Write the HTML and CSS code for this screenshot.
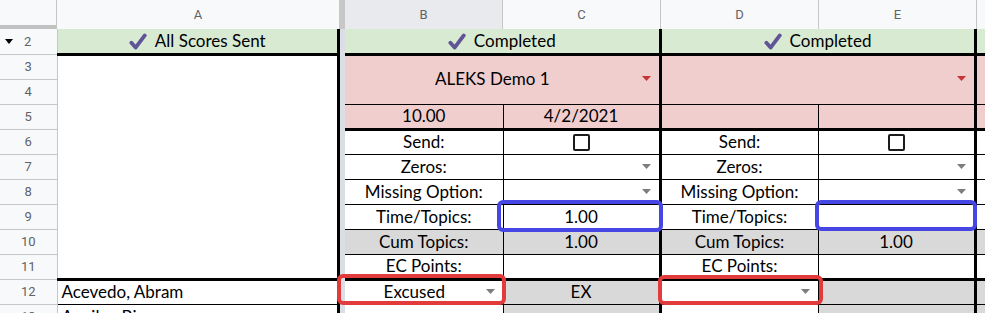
FILE: index.html
```html
<!DOCTYPE html>
<html lang="en">

<head>
  <meta charset="UTF-8">
  <meta name="viewport" content="width=device-width, initial-scale=1.0">
  <title>Scores Sheet</title>
  <link rel="stylesheet" href="styles.css">
</head>

<body>
  <div class="sheet">

    <!-- column letters -->
    <div class="col-heads">
      <div class="corner"></div>
      <div class="col-head head-a">A</div>
      <div class="freeze-bar"></div>
      <div class="col-head head-b selected">B</div>
      <div class="col-head head-c">C</div>
      <div class="col-head head-d">D</div>
      <div class="col-head head-e">E</div>
      <div class="col-head head-f"></div>
    </div>

    <div class="panes">
      <!-- frozen part: row numbers + column A -->
      <table class="pane pane-frozen">
        <colgroup>
          <col class="col-rh">
          <col class="col-a">
        </colgroup>
        <tr class="row-title">
          <th class="rh rh-fold"><svg class="fold" viewBox="0 0 8 5"><path d="M0 0h8L4 5z" /></svg>2</th>
          <td class="title">
            <svg class="tick" viewBox="0 0 18 17"><path d="M2.4 9.8L6.6 14.6L15.8 2.4" /></svg>All Scores Sent
          </td>
        </tr>
        <tr>
          <th class="rh">3</th>
          <td class="blank" rowspan="9"></td>
        </tr>
        <tr><th class="rh">4</th></tr>
        <tr><th class="rh">5</th></tr>
        <tr><th class="rh">6</th></tr>
        <tr><th class="rh">7</th></tr>
        <tr><th class="rh">8</th></tr>
        <tr><th class="rh">9</th></tr>
        <tr><th class="rh">10</th></tr>
        <tr><th class="rh">11</th></tr>
        <tr class="row-student">
          <th class="rh">12</th>
          <td class="name">Acevedo, Abram</td>
        </tr>
        <tr>
          <th class="rh">13</th>
          <td class="name">Aguilar, Bianca</td>
        </tr>
      </table>

      <div class="freeze-strip"></div>

      <!-- assignments -->
      <table class="pane pane-main">
        <colgroup>
          <col class="col-b">
          <col class="col-c">
          <col class="col-d">
          <col class="col-e">
          <col class="col-f">
        </colgroup>
        <tr class="row-title">
          <td class="title edge" colspan="2">
            <svg class="tick" viewBox="0 0 18 17"><path d="M2.4 9.8L6.6 14.6L15.8 2.4" /></svg>Completed
          </td>
          <td class="title edge" colspan="2">
            <svg class="tick" viewBox="0 0 18 17"><path d="M2.4 9.8L6.6 14.6L15.8 2.4" /></svg>Completed
          </td>
          <td class="title"></td>
        </tr>
        <tr>
          <td class="pink assign edge" colspan="2" rowspan="2">
            <div class="dd"><span>ALEKS Demo 1</span><svg class="arrow red" viewBox="0 0 9 5"><path d="M0 0h9L4.5 5z" /></svg></div>
          </td>
          <td class="pink assign edge" colspan="2" rowspan="2">
            <div class="dd"><span></span><svg class="arrow red" viewBox="0 0 9 5"><path d="M0 0h9L4.5 5z" /></svg></div>
          </td>
          <td class="pink" rowspan="2"></td>
        </tr>
        <tr></tr>
        <tr class="row-info">
          <td class="pink">10.00</td>
          <td class="pink edge">4/2/2021</td>
          <td class="pink"></td>
          <td class="pink edge"></td>
          <td class="pink"></td>
        </tr>
        <tr>
          <td>Send:</td>
          <td class="cb edge"><span class="box"></span></td>
          <td>Send:</td>
          <td class="cb edge"><span class="box"></span></td>
          <td></td>
        </tr>
        <tr>
          <td>Zeros:</td>
          <td class="edge"><div class="dd"><span></span><svg class="arrow" viewBox="0 0 9 5"><path d="M0 0h9L4.5 5z" /></svg></div></td>
          <td>Zeros:</td>
          <td class="edge"><div class="dd"><span></span><svg class="arrow" viewBox="0 0 9 5"><path d="M0 0h9L4.5 5z" /></svg></div></td>
          <td></td>
        </tr>
        <tr>
          <td>Missing Option:</td>
          <td class="edge"><div class="dd"><span></span><svg class="arrow" viewBox="0 0 9 5"><path d="M0 0h9L4.5 5z" /></svg></div></td>
          <td>Missing Option:</td>
          <td class="edge"><div class="dd"><span></span><svg class="arrow" viewBox="0 0 9 5"><path d="M0 0h9L4.5 5z" /></svg></div></td>
          <td></td>
        </tr>
        <tr>
          <td>Time/Topics:</td>
          <td class="edge">1.00</td>
          <td>Time/Topics:</td>
          <td class="edge"></td>
          <td></td>
        </tr>
        <tr class="row-cum">
          <td>Cum Topics:</td>
          <td class="edge">1.00</td>
          <td>Cum Topics:</td>
          <td class="edge">1.00</td>
          <td></td>
        </tr>
        <tr>
          <td>EC Points:</td>
          <td class="edge"></td>
          <td>EC Points:</td>
          <td class="edge"></td>
          <td></td>
        </tr>
        <tr class="row-student">
          <td><div class="dd"><span>Excused</span><svg class="arrow" viewBox="0 0 9 5"><path d="M0 0h9L4.5 5z" /></svg></div></td>
          <td class="grey edge">EX</td>
          <td><div class="dd"><span></span><svg class="arrow" viewBox="0 0 9 5"><path d="M0 0h9L4.5 5z" /></svg></div></td>
          <td class="grey edge"></td>
          <td class="grey"></td>
        </tr>
        <tr>
          <td></td>
          <td class="grey edge"></td>
          <td></td>
          <td class="grey edge"></td>
          <td class="grey"></td>
        </tr>
      </table>
    </div>

    <!-- highlight boxes drawn over the grid -->
    <div class="mark mark-blue mark-c9"></div>
    <div class="mark mark-blue mark-e9"></div>
    <div class="mark mark-red mark-b12"></div>
    <div class="mark mark-red mark-d12"></div>
  </div>
</body>

</html>
```

FILE: styles.css
```css
:root {
  --head-bg: #f8f9fa;
  --head-line: #c4c7c5;
  --head-text: #5f6368;
  --green: #d9ead3;
  --pink: #f0cece;
  --grey: #d9d9d9;
  --tick: #605497;
  --blue-mark: #4646e4;
  --red-mark: #e23b3b;
}

* {
  margin: 0;
  padding: 0;
  box-sizing: border-box;
}

html,
body {
  width: 985px;
  height: 313px;
  overflow: hidden;
  background: #fff;
}

body {
  font-family: 'Lato', 'Open Sans', sans-serif;
  color: #000;
}

.sheet {
  position: relative;
  width: 985px;
  height: 313px;
  overflow: hidden;
}

/* column letters */
.col-heads {
  display: flex;
  height: 29px;
  font-family: 'Roboto', sans-serif;
  font-size: 13px;
  color: var(--head-text);
}

.col-heads > div {
  flex: none;
  display: flex;
  align-items: center;
  justify-content: center;
  background: var(--head-bg);
}

.corner {
  width: 57px;
  border-right: 1px solid var(--head-line);
  box-shadow: inset 0 -4px 0 #c2c2c2;
}

.head-a {
  width: 282px;
}

.freeze-bar {
  width: 6px;
  background: #c7c7c7 !important;
}

.col-head.selected {
  background: #e8eaed;
}

.head-b,
.head-c,
.head-d,
.head-e {
  width: 158px;
  border-right: 1px solid var(--head-line);
}

.head-f {
  width: 60px;
}

/* body panes */
.panes {
  display: flex;
  align-items: flex-start;
}

.pane {
  flex: none;
  border-collapse: collapse;
  table-layout: fixed;
}

.pane tr {
  height: 25px;
}

.pane td {
  padding: 0 4px 2px;
  vertical-align: bottom;
  font-size: 17px;
  line-height: 20px;
  white-space: nowrap;
  overflow: hidden;
}

.pane-frozen {
  width: 337px;
}

.col-rh {
  width: 57px;
}

.col-a {
  width: 280px;
}

.rh {
  font-family: 'Roboto', sans-serif;
  font-size: 13px;
  font-weight: 400;
  color: var(--head-text);
  background: var(--head-bg);
  text-align: center;
  vertical-align: middle;
  border-right: 1px solid var(--head-line);
  border-bottom: 1px solid var(--head-line);
}

.rh-fold {
  text-align: left;
  padding-left: 5px;
}

.fold {
  width: 8px;
  height: 5px;
  margin: 0 11px 2px 0;
  fill: #000;
}

.freeze-strip {
  flex: none;
  width: 8px;
  height: 284px;
  border-left: 3px solid #000;
  background: #dcdee6;
}

.pane-main {
  width: 830px;
}

.col-b {
  width: 158px;
  border-left: hidden;
}

.col-c {
  width: 157px;
}

.col-d {
  width: 158px;
}

.col-e {
  width: 157px;
}

.col-f {
  width: 200px;
}

.pane-main td {
  border: 1px solid #000;
  text-align: center;
}

.pane-main td.edge {
  border-right: 3px solid #000;
}

.row-title td {
  background: var(--green);
  border-top: hidden;
  text-align: center;
}

.pane .row-title td {
  border-bottom: 3px solid #000;
}

.tick {
  width: 18px;
  height: 17px;
  margin-right: 8px;
  vertical-align: -3px;
  fill: none;
  stroke: var(--tick);
  stroke-width: 3.8;
  stroke-linecap: round;
  stroke-linejoin: round;
}

.pink {
  background: var(--pink);
}

.grey,
.row-cum td {
  background: var(--grey);
}

.pane-main .row-info td {
  border-bottom: 3px solid #000;
}

.pane .row-student td {
  border-top: 3px solid #000;
}

.name {
  text-align: left;
  border-bottom: 1px solid #000;
}

.assign {
  vertical-align: middle !important;
}

/* dropdown chips */
.dd {
  display: flex;
  align-items: center;
  height: 20px;
}

.dd span {
  flex: 1;
  text-align: center;
}

.arrow {
  flex: none;
  width: 9px;
  height: 5px;
  margin: 0 4px 0 6px;
  fill: #7d7d7d;
}

.arrow.red {
  fill: #c93434;
}

/* checkbox */
.cb {
  vertical-align: middle !important;
  padding: 1px 0 0 !important;
  line-height: 0 !important;
}

.box {
  display: inline-block;
  width: 17px;
  height: 17px;
  border: 2px solid #1c1c1c;
  border-radius: 2px;
  background: #fff;
}

/* hand-drawn highlight boxes */
.mark {
  position: absolute;
  border: 4px solid;
  border-radius: 6px;
}

.mark-blue {
  border-color: var(--blue-mark);
}

.mark-red {
  border-color: var(--red-mark);
}

.mark-c9 {
  left: 497px;
  top: 200px;
  width: 166px;
  height: 32px;
}

.mark-e9 {
  left: 815px;
  top: 200px;
  width: 162px;
  height: 31px;
}

.mark-b12 {
  left: 337px;
  top: 274px;
  width: 169px;
  height: 31px;
}

.mark-d12 {
  left: 658px;
  top: 275px;
  width: 165px;
  height: 30px;
}
```
